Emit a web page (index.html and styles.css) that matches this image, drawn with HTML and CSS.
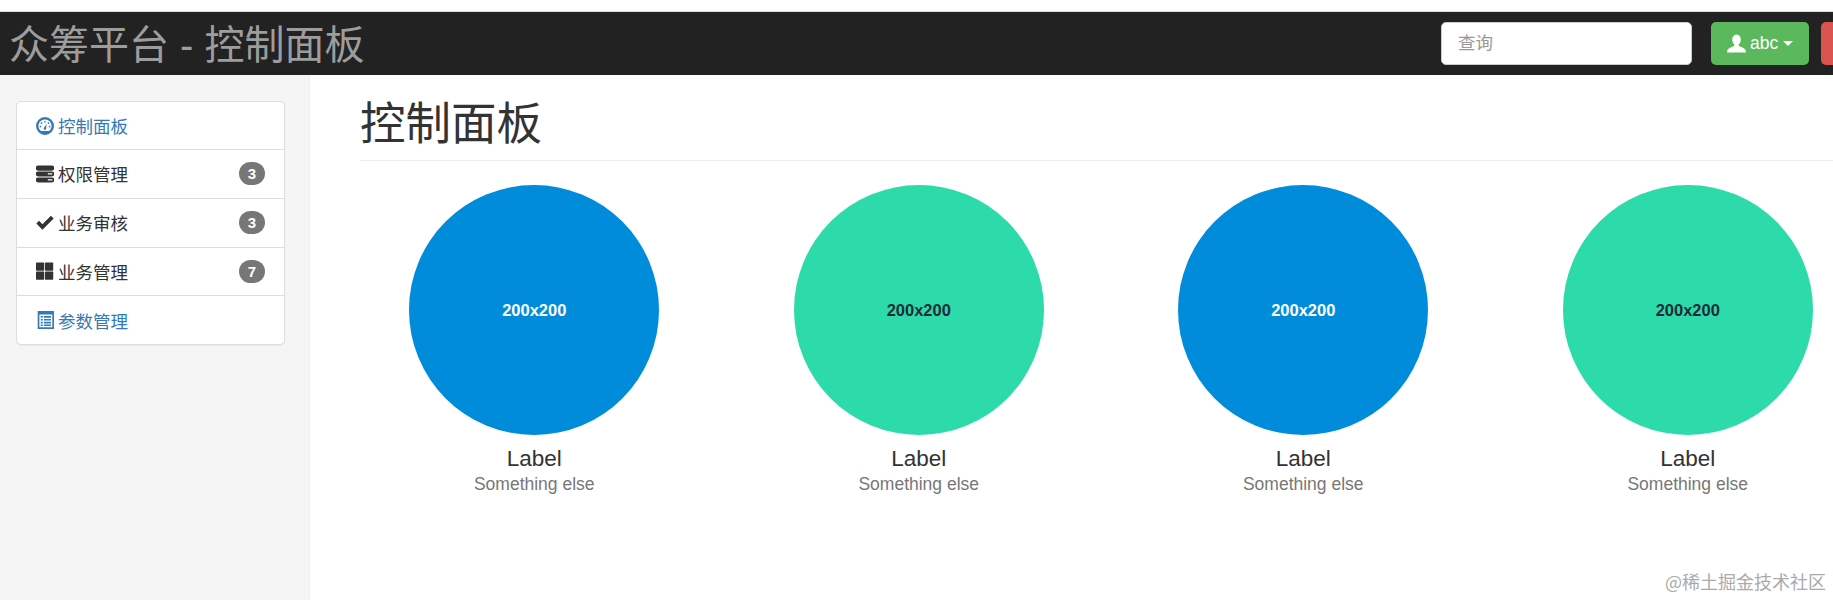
FILE: index.html
```html
<!DOCTYPE html>
<html lang="zh-CN">
  <head>
    <meta charset="UTF-8" />
    <meta name="viewport" content="width=device-width, initial-scale=1.0" />
    <title>控制面板</title>
    <link rel="stylesheet" href="styles.css">
  </head>
  <body>
    <div class="page">
      <nav class="navbar">
        <a class="brand">众筹平台 - 控制面板</a>
        <div class="nav-right">
          <input class="search" type="text" placeholder="查询" />
          <button class="btn btn-green">
            <svg class="icon" viewBox="0 0 16 16"><path d="M8 .5c2.300 0 3.600 1.800 3.600 4.200 0 1.700-.7 3.200-1.600 4-.3.3-.2 1 .2 1.300 1 .7 4.500 1.800 5.300 3.200.3.600.4 1.300.4 2.300H.1c0-1 .1-1.700.4-2.300.8-1.400 4.300-2.500 5.300-3.200.4-.3.5-1 .2-1.300-.9-.8-1.600-2.300-1.600-4 0-2.400 1.300-4.200 3.600-4.200z"/></svg>
            abc<span class="caret"></span>
          </button>
          <button class="btn btn-red"></button>
        </div>
      </nav>
      <div class="layout">
        <aside class="sidebar">
          <ul class="menu">
            <li class="menu-item link">
              <svg class="icon" viewBox="0 0 16 16"><path fill-rule="evenodd" d="M8 0a8 8 0 1 1 0 16A8 8 0 0 1 8 0zm0 2.200a5.800 5.800 0 0 0-4.600 9.300c.4.600 1 .9 1.700.9h5.800c.7 0 1.300-.3 1.700-.9A5.800 5.800 0 0 0 8 2.200z"/><circle cx="8" cy="4.200" r=".75"/><circle cx="4.900" cy="5.500" r=".75"/><circle cx="11.100" cy="5.500" r=".75"/><circle cx="3.900" cy="8.500" r=".75"/><circle cx="12.100" cy="8.500" r=".75"/><path d="M6.800 10l2.600-3.800-.4 4.600a1.200 1.200 0 0 1-2.200-.8z"/></svg>
              控制面板
            </li>
            <li class="menu-item">
              <svg class="icon" viewBox="0 0 16 16"><path fill-rule="evenodd" d="M2 .5h12a2.200 2.200 0 0 1 0 4.500H2A2.200 2.200 0 0 1 2 .5zM2 5.700h12a2.200 2.200 0 0 1 0 4.500H2a2.200 2.200 0 0 1 0-4.500zm8.500 1.700v1.100h4V7.400zM2 11h12a2.200 2.200 0 0 1 0 4.500H2A2.200 2.200 0 0 1 2 11zm8.500 1.700v1.100h4v-1.100z"/></svg>
              权限管理<span class="badge">3</span>
            </li>
            <li class="menu-item">
              <svg class="icon" viewBox="0 0 16 16"><path d="M.3 8.500L2.700 6l3 3L13.300 1.500l2.400 2.500L5.700 14z"/></svg>
              业务审核<span class="badge">3</span>
            </li>
            <li class="menu-item">
              <svg class="icon" viewBox="0 0 16 16"><rect x="0" y="0.500" width="7.300" height="7.300" rx=".6"/><rect x="8" y="0.500" width="7.300" height="7.300" rx=".6"/><rect x="0" y="8.500" width="7.300" height="7.300" rx=".6"/><rect x="8" y="8.500" width="7.300" height="7.300" rx=".6"/></svg>
              业务管理<span class="badge">7</span>
            </li>
            <li class="menu-item link">
              <svg class="icon" viewBox="0 0 16 16"><path fill-rule="evenodd" d="M1.500 0H16v16H1.500zM3 3v11.500h11.500V3zM4.200 4.500h1.800V6H4.200zm2.800 0h6.300V6H7zM4.200 7h1.800v1.500H4.200zM7 7h6.300v1.500H7zM4.200 9.500h1.800V11H4.200zm2.800 0h6.300V11H7zM4.200 12h1.800v1.300H4.200zm2.800 0h6.300v1.300H7z"/></svg>
              参数管理
            </li>
          </ul>
        </aside>
        <main class="main">
          <h1 class="page-title">控制面板</h1>
          <div class="cards">
            <div class="card">
              <div class="circle blue">200x200</div>
              <h4>Label</h4>
              <span class="muted">Something else</span>
            </div>
            <div class="card">
              <div class="circle green">200x200</div>
              <h4>Label</h4>
              <span class="muted">Something else</span>
            </div>
            <div class="card">
              <div class="circle blue">200x200</div>
              <h4>Label</h4>
              <span class="muted">Something else</span>
            </div>
            <div class="card">
              <div class="circle green">200x200</div>
              <h4>Label</h4>
              <span class="muted">Something else</span>
            </div>
          </div>
        </main>
      </div>
      <div class="watermark">@稀土掘金技术社区</div>
    </div>
  </body>
</html>
```

FILE: styles.css
```css
html,
body {
  margin: 0;
  height: 100%;
  overflow: hidden;
  background-color: white;
}
.page {
  position: relative;
  width: 1833px;
  height: 600px;
  padding-top: 11px;
  box-sizing: border-box;
  overflow: hidden;
  font-family: "Liberation Sans", "Noto Sans CJK SC", sans-serif;
  font-size: 17.5px;
  color: #333;
}
.navbar {
  display: flex;
  align-items: center;
  justify-content: space-between;
  height: 64px;
  background-color: #222;
  border-top: 1px solid #ddd;
  box-sizing: border-box;
}
.brand {
  margin-left: 9px;
  margin-bottom: 3px;
  font-size: 40px;
  color: #9d9d9d;
}
.nav-right {
  display: flex;
  align-items: center;
  width: 392px;
  flex-shrink: 0;
}
.search {
  width: 251px;
  height: 43px;
  padding: 0 16px;
  border: 1px solid #ccc;
  border-radius: 5px;
  box-sizing: border-box;
  font-family: inherit;
  font-size: 17.5px;
  margin-right: 19px;
}
.search::placeholder {
  color: #999;
}
.btn {
  display: flex;
  align-items: center;
  flex-shrink: 0;
  height: 43px;
  border: 0;
  border-radius: 5px;
  color: white;
  font-family: inherit;
  font-size: 17.5px;
}
.btn-green {
  width: 98px;
  padding: 0 0 0 16px;
  margin-right: 12px;
  background-color: #5cb85c;
}
.btn-red {
  width: 70px;
  background-color: #d9534f;
}
.btn .icon {
  width: 19px;
  height: 19px;
  margin-right: 4px;
}
.caret {
  margin-left: 5px;
  border-top: 5px solid white;
  border-left: 5px solid transparent;
  border-right: 5px solid transparent;
}
.icon {
  width: 18px;
  height: 18px;
  fill: currentColor;
  flex-shrink: 0;
}
.layout {
  display: flex;
  height: 525px;
}
.sidebar {
  width: 310px;
  padding: 26px 24px 0 16px;
  box-sizing: border-box;
  flex-shrink: 0;
  background-color: #f5f5f5;
  border-right: 1px solid #eee;
}
.menu {
  margin: 0;
  padding: 0;
  list-style: none;
  background-color: white;
  border: 1px solid #ddd;
  border-radius: 5px;
  box-shadow: 0 1px 1px rgba(0, 0, 0, 0.05);
}
.menu-item {
  display: flex;
  align-items: center;
  gap: 4px;
  height: 47.8px;
  padding: 0 19px;
  border-top: 1px solid #ddd;
}
.menu-item:first-child {
  height: 47px;
  border-top: 0;
}
.link {
  color: #337ab7;
}
.badge {
  margin-left: auto;
  min-width: 26px;
  height: 23px;
  line-height: 23px;
  border-radius: 12px;
  background-color: #777;
  color: white;
  font-size: 15px;
  font-weight: bold;
  text-align: center;
}
.main {
  flex: 1;
  min-width: 0;
  padding-left: 50px;
}
.page-title {
  margin: 0;
  height: 86px;
  line-height: 100px;
  box-sizing: border-box;
  border-bottom: 1px solid #eee;
  font-size: 45.5px;
  font-weight: normal;
}
.cards {
  display: flex;
  width: 1538px;
  margin-left: -18px;
  margin-top: 24px;
}
.card {
  width: 384.5px;
  flex-shrink: 0;
  text-align: center;
}
.circle {
  display: flex;
  align-items: center;
  justify-content: center;
  width: 250px;
  height: 250px;
  margin: 0 auto;
  border-radius: 50%;
  font-size: 16.5px;
  font-weight: bold;
}
.blue {
  background-color: #008cdb;
  color: white;
}
.green {
  background-color: #2ddbaa;
  color: #1e2b37;
}
.card h4 {
  margin: 11px 0 2px;
  font-size: 22.5px;
  font-weight: normal;
  line-height: 26px;
}
.muted {
  color: #777;
  font-size: 17.5px;
}
.watermark {
  position: absolute;
  right: 7px;
  bottom: 6px;
  font-family: "Noto Sans CJK SC", sans-serif;
  font-size: 18px;
  color: #aaa;
}
```
